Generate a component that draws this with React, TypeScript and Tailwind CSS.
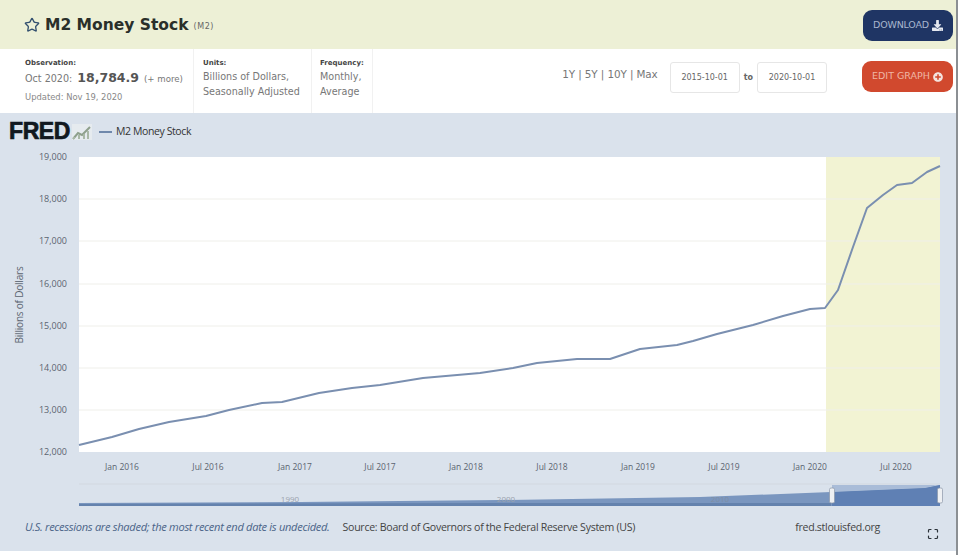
import { Star, Maximize } from "lucide-react";
import { FaDownload, FaPlusCircle } from "react-icons/fa";

// pixel positions read off the plot, roughly monthly
const linePoints =
  "79,445 112,437 139,429 169,422 206,416 229,410 262,403 282,402 319,393 352,388 380,385 423,378 480,373 513,368 537,363 577,359 610,359 625,354 640,349 677,345 693,341 717,334 753,325 783,316 810,309 825,308 838,290 853,247 867,208 883,195 897,185 912,183 927,172 940,166";

const yTicks = [
  ["19,000", 157],
  ["18,000", 199],
  ["17,000", 241],
  ["16,000", 284],
  ["15,000", 326],
  ["14,000", 368],
  ["13,000", 410],
  ["12,000", 452],
] as const;

const xTicks = [
  ["Jan 2016", 122],
  ["Jul 2016", 208],
  ["Jan 2017", 295],
  ["Jul 2017", 380],
  ["Jan 2018", 466],
  ["Jul 2018", 552],
  ["Jan 2019", 638],
  ["Jul 2019", 724],
  ["Jan 2020", 810],
  ["Jul 2020", 896],
] as const;

function Chart() {
  return (
    <svg width="956" height="360" viewBox="0 150 956 360" className="block">
      <rect x="79" y="157" width="861" height="295" fill="#ffffff" />
      <rect x="826" y="157" width="114" height="295" fill="#f2f3d3" />
      {yTicks.slice(1, 7).map(([label, y]) => (
        <line key={label} x1="79" x2="940" y1={y} y2={y} stroke="#efefea" strokeWidth="1" />
      ))}
      {yTicks.map(([label, y]) => (
        <text key={label} x="67" y={y + 3} textAnchor="end" fontSize="9" fill="#5a6470" fontFamily="Open Sans, sans-serif">
          {label}
        </text>
      ))}
      <text
        x="23"
        y="305"
        transform="rotate(-90 23 305)"
        textAnchor="middle"
        fontSize="10"
        letterSpacing="-0.2"
        fill="#5a6470"
        fontFamily="Open Sans, sans-serif"
      >
        Billions of Dollars
      </text>
      <polyline points={linePoints} fill="none" stroke="#7a8fb0" strokeWidth="2" strokeLinejoin="round" />
      {xTicks.map(([label, x]) => (
        <text key={label} x={x} y="470" textAnchor="middle" fontSize="8.5" fill="#5a6470" fontFamily="Open Sans, sans-serif">
          {label}
        </text>
      ))}

      <line x1="79" x2="940" y1="484" y2="484" stroke="#d2d8e0" />
      <path d="M79 503 L300 502 L500 500 L700 497 L831 492 L925 488 L940 485 L940 506 L79 506 Z" fill="#7a96bf" />
      <path d="M79 504 L500 503 L831 503 L831 506 L79 506 Z" fill="#6482ad" />
      <path d="M832 485 L938 485 L925 488 L832 492 Z" fill="#a9bcd8" />
      <path d="M832 492 L925 488 L940 485 L940 506 L832 506 Z" fill="#5f80b4" />
      <text x="290" y="502" textAnchor="middle" fontSize="8" fill="#9aa3ae" fontFamily="Open Sans, sans-serif">1990</text>
      <text x="506" y="502" textAnchor="middle" fontSize="8" fill="#9aa3ae" fontFamily="Open Sans, sans-serif">2000</text>
      <text x="720" y="502" textAnchor="middle" fontSize="8" fill="#7f8ea3" fontFamily="Open Sans, sans-serif">2010</text>
      <rect x="829.5" y="488" width="5" height="15" rx="1.5" fill="#eef0f3" stroke="#8b97a8" strokeWidth="0.7" />
      <rect x="937.5" y="488" width="5" height="15" rx="1.5" fill="#eef0f3" stroke="#8b97a8" strokeWidth="0.7" />
    </svg>
  );
}

function InfoCell({ label, lines, className }: { label: string; lines: string[]; className: string }) {
  return (
    <div className={`h-full border-r border-[#f1f1f1] pt-[10px] ${className}`}>
      <div className="text-[7px] font-bold leading-[9px] text-[#444]">{label}</div>
      {lines.map((line) => (
        <div key={line} className="mt-[3px] text-[9.6px] leading-[12px] text-[#777]">
          {line}
        </div>
      ))}
    </div>
  );
}

export default function App() {
  return (
    <div className="flex h-[555px] w-[958px] overflow-hidden bg-white font-['DejaVu_Sans',sans-serif]">
      <div className="flex w-[956px] flex-col">
        <header className="flex h-[49px] items-start justify-between bg-[#edf0d6] pl-[24px] pr-[3px]">
          <div className="flex items-center gap-[5px] pt-[15px]">
            <Star size={16} strokeWidth={2} className="text-[#33506f]" />
            <h1 className="text-[15.5px] font-bold leading-[20px] text-[#2a2f2a]">M2 Money Stock</h1>
            <span className="mt-[3px] text-[8px] tracking-[0.6px] text-[#666]">(M2)</span>
          </div>
          <button className="mt-[10px] flex h-[31px] w-[90px] items-center justify-center gap-[3px] rounded-[9px] bg-[#1f3564] text-[9.5px] tracking-[-0.2px] text-[#a9b6cf]">
            DOWNLOAD
            <FaDownload size={11} className="text-[#e5e9f0]" />
          </button>
        </header>

        <section className="flex h-[64px] items-start bg-white pl-[25px] pr-[3px]">
          <div className="h-full w-[169px] border-r border-[#f1f1f1] pt-[10px]">
            <div className="text-[7px] font-bold leading-[9px] text-[#444]">Observation:</div>
            <div className="mt-[2px] flex items-baseline gap-[5px] text-[9.6px] leading-[15px] text-[#777]">
              <span>Oct 2020:</span>
              <span className="text-[12.5px] font-bold text-[#555]">18,784.9</span>
              <span className="text-[8.6px]">(+ more)</span>
            </div>
            <div className="mt-[5px] text-[8.4px] leading-[11px] text-[#888]">Updated: Nov 19, 2020</div>
          </div>
          <InfoCell
            label="Units:"
            lines={["Billions of Dollars,", "Seasonally Adjusted"]}
            className="w-[118px] pl-[9px]"
          />
          <InfoCell label="Frequency:" lines={["Monthly,", "Average"]} className="w-[61px] pl-[8px]" />
          <div className="ml-auto flex items-center pt-[13px]">
            <span className="mr-[12px] -translate-y-[3px] text-[10.4px] tracking-[-0.1px] text-[#777]">1Y | 5Y | 10Y | Max</span>
            <div className="flex h-[31px] w-[70px] items-center justify-center rounded-[3px] border border-[#e6e6e6] text-[8px] text-[#666]">
              2015-10-01
            </div>
            <span className="mx-[4px] text-[8px] font-bold text-[#666]">to</span>
            <div className="flex h-[31px] w-[70px] items-center justify-center rounded-[3px] border border-[#e6e6e6] text-[8px] text-[#666]">
              2020-10-01
            </div>
            <button className="-mt-[2px] ml-[35px] flex h-[31px] w-[91px] items-center justify-center gap-[3px] rounded-[9px] bg-[#d1492e] text-[9.5px] text-[#efb7a6]">
              EDIT GRAPH
              <FaPlusCircle size={10} className="text-[#f4e4df]" />
            </button>
          </div>
        </section>

        <section className="flex h-[438px] flex-col bg-[#dae2ec]">
          <div className="flex h-[37px] items-center pl-[9px]">
            <span className="font-['Liberation_Sans',sans-serif] text-[23px] leading-none font-bold tracking-[-0.4px] text-[#111820] [-webkit-text-stroke:0.7px_#111820]">
              FRED
            </span>
            <svg width="20" height="16" viewBox="0 0 20 16" className="ml-[2px]">
              <rect width="20" height="16" fill="#e6ebef" />
              <path d="M1 15 L6 9 L10 11 L18 3" fill="none" stroke="#8ea08c" strokeWidth="2" />
              <path d="M2 15 L2 13 M7 15 L7 11 M12 15 L12 10 M16 15 L16 7" stroke="#a9b8a6" strokeWidth="2" />
            </svg>
            <span className="ml-[7px] h-[2px] w-[13px] bg-[#6f88ab]" />
            <span className="ml-[4px] font-['Open_Sans',sans-serif] text-[10.5px] tracking-[-0.4px] text-[#333]">
              M2 Money Stock
            </span>
          </div>
          <Chart />
          <footer className="flex flex-1 items-start pl-[25px] pr-[17px] pt-[10px] font-['Open_Sans',sans-serif] leading-[14px]">
            <span className="text-[11.1px] tracking-[-0.3px] italic text-[#4a6488]">U.S. recessions are shaded; the most recent end date is undecided.</span>
            <span className="ml-[13px] text-[10.6px] tracking-[-0.3px] text-[#444]">Source: Board of Governors of the Federal Reserve System (US)</span>
            <span className="ml-auto mr-[47px] text-[10.6px] tracking-[-0.3px] text-[#444]">fred.stlouisfed.org</span>
            <Maximize size={12} strokeWidth={2.4} className="mt-[8px] text-[#2a3138]" />
          </footer>
        </section>
      </div>
      <div className="w-[2px] bg-[#8b8f93]" />
    </div>
  );
}
